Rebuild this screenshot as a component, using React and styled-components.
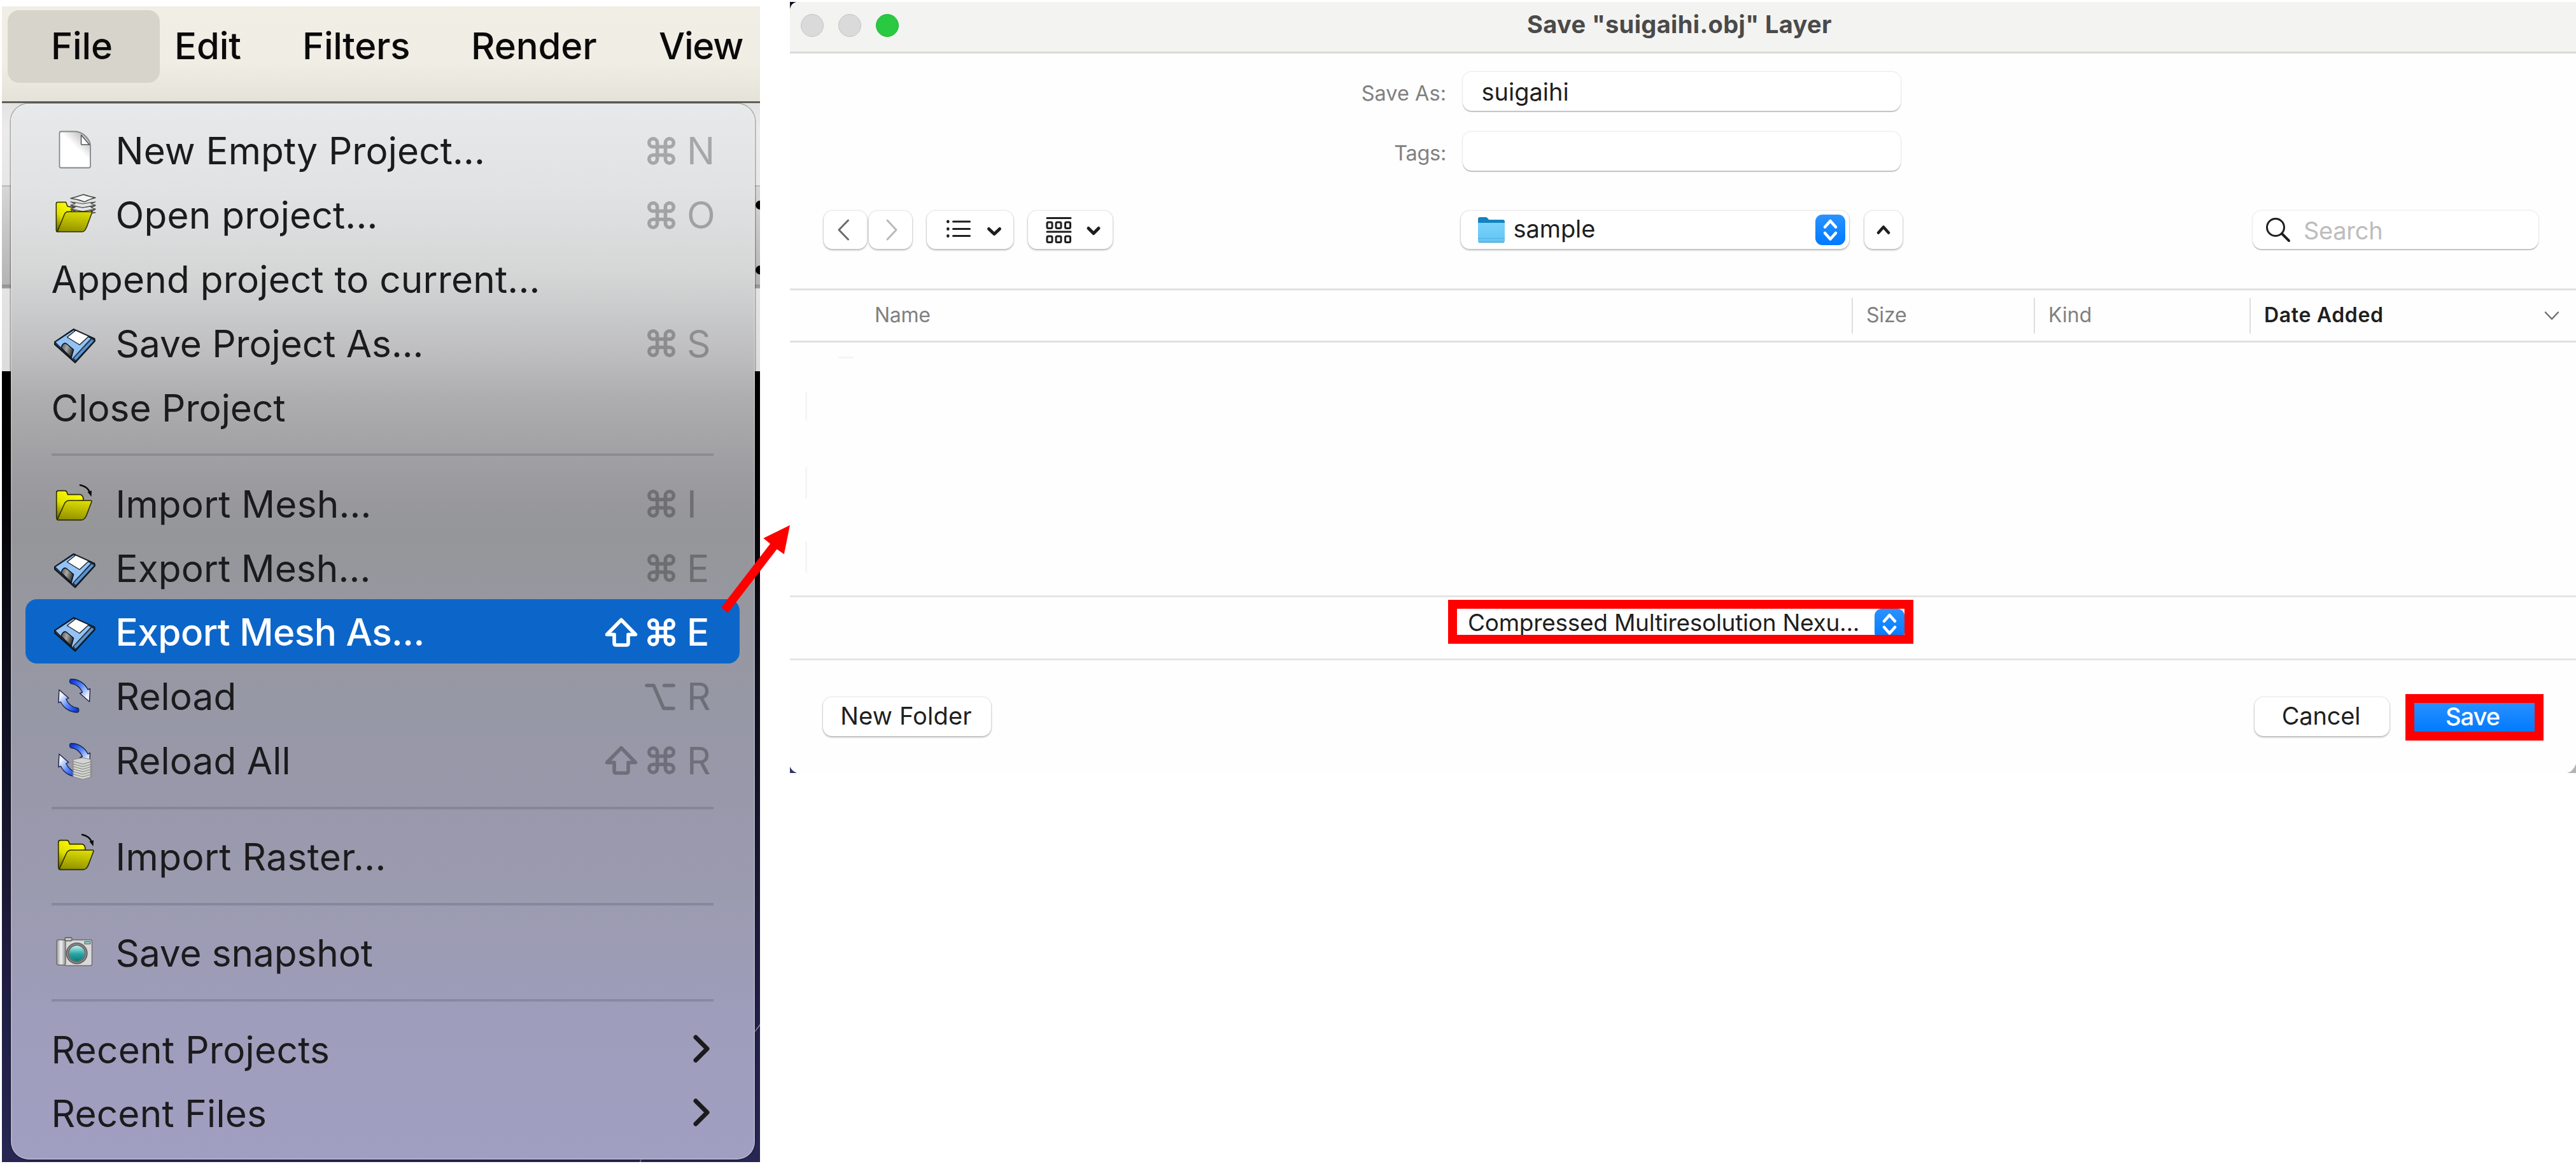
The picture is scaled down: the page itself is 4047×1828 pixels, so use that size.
import React from "react";
import styled, { createGlobalStyle, css } from "styled-components";

const GlobalStyle = createGlobalStyle`
  * { box-sizing: border-box; }
  body { margin: 0; background: #fff; }
`;

const Page = styled.main`
  position: relative;
  width: 4047px;
  height: 1828px;
  overflow: hidden;
  display: grid;
  grid-template-columns: 1191px 2806px;
  column-gap: 47px;
  padding-left: 3px;
  align-items: start;
  background: #fff;
  font-family: Inter, "Liberation Sans", sans-serif;
  font-optical-sizing: none;
`;

const Text = styled.span`
  display: block;
  white-space: nowrap;
  letter-spacing: ${(p) => p.$ls || 0}px;
`;

/* ---------- Application window with the open File menu ---------- */

const AppWindow = styled.section`
  margin-top: 10px;
  height: 1815px;
  display: flex;
  flex-direction: column;
  overflow: hidden;
`;

const MenuBar = styled.nav`
  height: 152px;
  display: flex;
  align-items: flex-start;
  padding: 6px 0 0 9px;
  border-bottom: 3px solid #5f605a;
  background: linear-gradient(#f1eee6 0, #efede4 60%, #e4e2d9 100%);
`;

const MenuTitle = styled.div`
  height: 114px;
  flex: none;
  display: flex;
  align-items: center;
  padding-left: ${(p) => p.$pad}px;
  padding-bottom: 2px;
  width: ${(p) => p.$w}px;
  border-radius: 18px;
  color: #0a0a0a;
  font-size: 58px;
  font-weight: 500;
  line-height: 72px;
  ${(p) => p.$open && css`background: #d7d4cc;`}
`;

const Backdrop = styled.div`
  position: relative;
  flex: 1;
  min-height: 0;
  padding: 1px 8px 4px 14px;
  background: linear-gradient(
    #e2e3e2 0, #ebebeb 40px, #e7e7e7 129px, #b9b9b9 129px, #b9b9b9 131px,
    #d6d6d6 131px, #b4b4b4 285px, #8f8f8f 285px, #a2a2a2 291px,
    #e4e4e4 291px, #dcdcdc 421px, #000 421px, #010101 560px, #0b0b16 800px,
    #15152b 1100px, #1e1d40 1350px, #282653 1663px
  );
`;

const BackdropDetail = styled.svg`
  position: absolute;
  inset: 0;
  width: 1191px;
  height: 1663px;
`;

const Menu = styled.div`
  position: relative;
  height: 100%;
  padding: 22px 24px 0 23px;
  border-radius: 28px;
  box-shadow: inset 0 0 0 2px rgba(255, 255, 255, 0.16), 0 0 0 1.5px rgba(0, 0, 0, 0.28);
  background: linear-gradient(
    #e7e9ea 0, #e0e2e3 140px, #d5d7d7 265px, #c8c9ca 335px, #bcbcbe 400px,
    #aeaeb0 460px, #a4a4a6 530px, #9b9a9f 600px, #959699 670px,
    #9797a0 790px, #9698a5 940px, #9998ab 1090px, #9b9bb0 1240px,
    #9e9dbb 1440px, #a09fc2 1660px
  );
`;

const MenuRow = styled.div`
  height: 100.8px;
  display: flex;
  align-items: center;
  padding: 0 41px 0 42px;
  border-radius: 18px;
  font-size: 58.5px;
  line-height: 72px;
  color: ${(p) => (p.$active ? "#fff" : "#1b1b1d")};
  font-weight: ${(p) => (p.$active ? 500 : 400)};
  background: ${(p) => (p.$active ? "#0c66c9" : "transparent")};
`;

const RowLabel = styled(Text)`
  padding-top: 4px;
  flex: 1;
  margin-left: ${(p) => (p.$plain ? -1.5 : 0)}px;
`;

const IconSlot = styled.svg`
  width: 72px;
  height: 72px;
  flex: none;
  margin-right: 27.5px;
  overflow: visible;
`;

const MenuRule = styled.div`
  height: 50.4px;
  margin: 0 41px 0 41px;
  display: flex;
  align-items: center;
  &::before {
    content: "";
    flex: 1;
    height: 4px;
    background: rgba(60, 58, 75, 0.2);
  }
`;

const Shortcut = styled.div`
  display: flex;
  align-items: center;
  gap: 13px;
  color: ${(p) => (p.$active ? "#fff" : "rgba(0, 0, 0, 0.27)")};
`;

const KeyGlyph = styled.svg`
  width: 50px;
  height: 50px;
  margin-top: 3px;
  overflow: visible;
  fill: none;
  stroke: currentColor;
  stroke-width: 5.6;
  stroke-linecap: round;
  stroke-linejoin: round;
`;

const KeyLetter = styled(Text)`
  width: 42px;
  margin-left: 2px;
  padding-top: 4px;
`;

const SubChevron = styled.svg`
  width: 32px;
  height: 50px;
  fill: none;
  stroke: #1b1b1d;
  stroke-width: 7;
  stroke-linecap: round;
  stroke-linejoin: round;
`;

const NewIcon = () => (
  <IconSlot viewBox="0 0 72 72">
    <defs>
      <linearGradient id="docShade" x1="0.9" y1="0" x2="0.45" y2="0.55">
        <stop offset="0.1" stopColor="#b5b5b5" />
        <stop offset="0.8" stopColor="#fff" />
      </linearGradient>
    </defs>
    <path d="M14 7.5H36C48 7.5 60 20 60 30V62a2.5 2.5 0 0 1-2.5 2.5H14a2.5 2.5 0 0 1-2.5-2.5V10A2.5 2.5 0 0 1 14 7.5Z" fill="url(#docShade)" stroke="#86878a" strokeWidth="1.8" />
    <path d="M45.5 13V26.5q0 2 2 1.800H58.5Z" fill="#fff" stroke="#55565a" strokeWidth="1.5" strokeLinejoin="round" />
  </IconSlot>
);

const FolderDefs = () => (
  <defs>
    <linearGradient id="folderBack" x1="0.6" y1="0" x2="0" y2="1">
      <stop offset="0" stopColor="#ffff00" />
      <stop offset="0.5" stopColor="#dede00" />
      <stop offset="1" stopColor="#555500" />
    </linearGradient>
    <linearGradient id="folderFront" x1="0.6" y1="0" x2="0.4" y2="1">
      <stop offset="0" stopColor="#dcdc00" />
      <stop offset="1" stopColor="#929200" />
    </linearGradient>
  </defs>
);

const OpenIcon = () => (
  <IconSlot viewBox="0 0 72 72">
    <FolderDefs />
    <path d="M8 64Q6.3 64 6.3 61V20q0-2.5 2.5-2.5H21.5l2.5 6.5 11 2.5-6 6H25L8 64Z" fill="url(#folderBack)" stroke="#2b2b00" strokeWidth="1.5" strokeLinejoin="round" />
    {[29, 23, 17].map((y) => (
      <path key={y} d={`M29 ${y}l7 3-7 2 19 4 20-4-7-2 7-3-20 3z`} fill="#e4e4e4" stroke="#4a4a4a" strokeWidth="1.2" strokeLinejoin="round" />
    ))}
    <path d="M29 11.5Q39 9 49 5.5Q60 9 68 10.5Q57 13.5 51 17Q41 13 29 11.5Z" fill="#f5f5f5" stroke="#4a4a4a" strokeWidth="1.4" strokeLinejoin="round" />
    <path d="M23 32.5H63L54 57Q51 64 47 64H8Q15 47 19 37Q21 32.5 25 32.5Z" fill="url(#folderFront)" stroke="#2b2b00" strokeWidth="1.5" strokeLinejoin="round" />
  </IconSlot>
);

const ImportIcon = ({ box }) => (
  <IconSlot viewBox={box || "0 0 72 72"}>
    <FolderDefs />
    <path d="M11 57.5Q9.7 56 9.7 53V15q0-3.400 3-3.400H23q2.7 0 3.5 3.5l.7 2.5H47q5 1 5 9L26 30Z" fill="url(#folderBack)" stroke="#2b2b00" strokeWidth="1.6" strokeLinejoin="round" />
    <path d="M30 27H63.5q2 0 1.200 2.5L57 50Q54 57.6 49 57.6H12.5q-1.5 0-.8-2L22 32.5Q24.5 27 30 27Z" fill="url(#folderFront)" stroke="#2b2b00" strokeWidth="1.6" strokeLinejoin="round" />
    <path d="M47 2.8Q58 5 62 14" fill="none" stroke="#0c0c0c" strokeWidth="2.6" strokeLinecap="round" />
    <path d="M58.5 13.5L65 11.5L64.5 21Z" fill="#0c0c0c" />
  </IconSlot>
);

const SaveIcon = () => (
  <IconSlot viewBox="0 0 72 72">
    <defs>
      <linearGradient id="shutter" x1="0" y1="0.3" x2="1" y2="0.7">
        <stop offset="0" stopColor="#5c5c5c" />
        <stop offset="0.4" stopColor="#a8a8a8" />
        <stop offset="1" stopColor="#1c1c1c" />
      </linearGradient>
    </defs>
    <path d="M4 35L33.5 15L66.5 30L67 33.5L36 67.5L4 39Z" fill="#23364d" stroke="#10161f" strokeWidth="2" strokeLinejoin="round" />
    <path d="M5 35.3L33.5 16.5L61 29.5L31.5 61.5Z" fill="#93c3f5" stroke="#1d2a3a" strokeWidth="1" strokeLinejoin="round" />
    <path d="M62 31L65.5 33L37 63.5L34 60.5Z" fill="#5b93cf" />
    <path d="M37 16.8L57.5 26L43 39.5L23.5 27.5Z" fill="#fff" stroke="#1c232b" strokeWidth="1.4" strokeLinejoin="round" />
    <path d="M14 44Q17 35.5 22 37.5L33.5 47L30 60Z" fill="url(#shutter)" stroke="#111" strokeWidth="1.5" strokeLinejoin="round" />
  </IconSlot>
);

const ReloadArrow = ({ flip }) => (
  <path
    transform={flip ? "rotate(180 34.7 36.6)" : undefined}
    d="M30 10.5C41 10.5 51 16.5 56 27L59.5 25.5L58.5 46L43.5 33L47.5 31C44 23.5 38 18.5 30 17.5C26.5 16.5 27 10.5 30 10.5Z"
    fill="url(#reloadBlue)"
    stroke="#1d2445"
    strokeWidth="1.4"
    strokeLinejoin="round"
  />
);

const ReloadIcon = ({ stack }) => (
  <IconSlot viewBox="0 0 72 72">
    <defs>
      <linearGradient id="reloadBlue" x1="0" y1="0" x2="1" y2="1">
        <stop offset="0.1" stopColor="#0a3be0" />
        <stop offset="0.45" stopColor="#5c8bff" />
        <stop offset="0.8" stopColor="#eef2ff" />
      </linearGradient>
    </defs>
    <ReloadArrow />
    <ReloadArrow flip />
    {stack &&
      [62, 58, 54, 50, 46, 42, 38].map((y) => (
        <path key={y} d={`M32 ${y - 2}l16-3 14 3-2 2 2 1-14 4-14-4-1-1z`} fill="#d4d4d2" stroke="#85857f" strokeWidth="1.1" strokeLinejoin="round" />
      ))}
  </IconSlot>
);

const CameraIcon = () => (
  <IconSlot viewBox="0 0 72 72">
    <defs>
      <linearGradient id="lens" x1="0" y1="0" x2="0" y2="1">
        <stop offset="0" stopColor="#b9f0ee" />
        <stop offset="0.55" stopColor="#27a3a3" />
        <stop offset="1" stopColor="#0c7c7e" />
      </linearGradient>
      <linearGradient id="grip" x1="0" y1="0" x2="1" y2="0">
        <stop offset="0" stopColor="#9a9a9a" />
        <stop offset="0.5" stopColor="#f1f1f1" />
        <stop offset="1" stopColor="#8d8d8d" />
      </linearGradient>
    </defs>
    <rect x="19" y="17" width="43.5" height="40.5" rx="2.5" fill="#d9d9d9" stroke="#6c6c6c" strokeWidth="1.4" />
    <rect x="7" y="17" width="14" height="39.5" rx="3" fill="url(#grip)" stroke="#6c6c6c" strokeWidth="1.4" />
    <rect x="20" y="13.5" width="11" height="5" rx="2" fill="#c9c9c9" stroke="#555" strokeWidth="1.3" />
    <rect x="51" y="19.5" width="9" height="4" fill="#7fc9c7" stroke="#5b6a6a" strokeWidth="1" />
    <circle cx="38.7" cy="38.3" r="14.5" fill="none" stroke="#616161" strokeWidth="5" />
    <circle cx="38.7" cy="38.3" r="14.5" fill="none" stroke="#8f8f8f" strokeWidth="1.6" />
    <circle cx="38.7" cy="38.3" r="12" fill="url(#lens)" />
  </IconSlot>
);

const Command = () => (
  <KeyGlyph viewBox="-25 -25 50 50">
    <path transform="scale(2.14) translate(-12 -12)" strokeWidth="2.6" d="M15 6v12a3 3 0 1 0 3-3H6a3 3 0 1 0 3 3V6a3 3 0 1 0-3 3h12a3 3 0 1 0-3-3" />
  </KeyGlyph>
);
const Shift = () => (
  <KeyGlyph viewBox="-25 -25 50 50">
    <path d="M0-19.5L22.5 3.5H11V17q0 3-3 3H-8q-3 0-3-3V3.5H-22.5Z" />
  </KeyGlyph>
);
const Option = () => (
  <KeyGlyph viewBox="-25 -25 50 50">
    <path d="M-23-17.5H-12L3.500 18.500H19M4.5-17.5H19" />
  </KeyGlyph>
);
const KEYS = { cmd: Command, shift: Shift, opt: Option };

const MENU = [
  { label: "New Empty Project...", ls: 0.11, icon: <NewIcon />, keys: ["cmd"], k: "N" },
  { label: "Open project...", ls: 0.2, icon: <OpenIcon />, keys: ["cmd"], k: "O" },
  { label: "Append project to current...", ls: 0.19 },
  { label: "Save Project As...", ls: -0.03, icon: <SaveIcon />, keys: ["cmd"], k: "S" },
  { label: "Close Project", ls: 0.03 },
  null,
  { label: "Import Mesh...", ls: 0.2, icon: <ImportIcon box="3 -5 72 72" />, keys: ["cmd"], k: "I" },
  { label: "Export Mesh...", ls: 0.1, icon: <SaveIcon />, keys: ["cmd"], k: "E" },
  { label: "Export Mesh As...", ls: -0.55, icon: <SaveIcon />, keys: ["shift", "cmd"], k: "E", active: true },
  { label: "Reload", ls: 0.09, icon: <ReloadIcon />, keys: ["opt"], k: "R" },
  { label: "Reload All", ls: 0.07, icon: <ReloadIcon stack />, keys: ["shift", "cmd"], k: "R" },
  null,
  { label: "Import Raster...", ls: 0.39, icon: <ImportIcon /> },
  null,
  { label: "Save snapshot", ls: -0.1, icon: <CameraIcon /> },
  null,
  { label: "Recent Projects", ls: 0.3, sub: true },
  { label: "Recent Files", ls: 0.18, sub: true },
];

const TITLES = [
  { t: "File", w: 239, pad: 68, ls: -0.1, open: true },
  { t: "Edit", w: 201, pad: 23, ls: -0.1 },
  { t: "Filters", w: 265, pad: 23, ls: -0.3 },
  { t: "Render", w: 295, pad: 23, ls: -0.1 },
  { t: "View", w: 160, pad: 23, ls: -1.2 },
];

function FileMenu() {
  return (
    <AppWindow>
      <MenuBar>
        {TITLES.map((m) => (
          <MenuTitle key={m.t} $w={m.w} $pad={m.pad} $open={m.open}>
            <Text $ls={m.ls}>{m.t}</Text>
          </MenuTitle>
        ))}
      </MenuBar>
      <Backdrop>
        <BackdropDetail viewBox="0 0 1191 1663">
          <circle cx="1191" cy="160" r="7" fill="#000" />
          <circle cx="1191" cy="262" r="7" fill="#000" />
          <path d="M1180 1462L1192 1446M1002 1664L1005 1658" stroke="#8d8b98" strokeWidth="1.5" />
        </BackdropDetail>
        <Menu>
          {MENU.map((m, i) =>
            m === null ? (
              <MenuRule key={i} />
            ) : (
              <MenuRow key={i} $active={m.active}>
                {m.icon}
                <RowLabel $ls={m.ls} $plain={!m.icon}>{m.label}</RowLabel>
                {m.keys && (
                  <Shortcut $active={m.active}>
                    {m.keys.map((k) => {
                      const Key = KEYS[k];
                      return <Key key={k} />;
                    })}
                    <KeyLetter>{m.k}</KeyLetter>
                  </Shortcut>
                )}
                {m.sub && (
                  <SubChevron viewBox="0 0 32 50">
                    <path d="M4 7L22 25L4 43" />
                  </SubChevron>
                )}
              </MenuRow>
            )
          )}
        </Menu>
      </Backdrop>
    </AppWindow>
  );
}

/* ---------- Save dialog ---------- */

const Dialog = styled.section`
  position: relative;
  margin-top: 3px;
  height: 1211px;
  display: flex;
  flex-direction: column;
  background: #fefefe;
`;

const TitleBar = styled.header`
  height: 81px;
  display: grid;
  grid-template-columns: 1fr auto 1fr;
  align-items: center;
  padding: 0 17px 4px;
  border-bottom: 3px solid #dadad9;
  background: #f3f3f1;
`;

const Lights = styled.div`
  display: flex;
  gap: 23px;
`;

const Light = styled.span`
  width: 36px;
  height: 36px;
  border-radius: 50%;
  border: 1.5px solid ${(p) => (p.$on ? "#22b83a" : "#c4c4c3")};
  background: ${(p) => (p.$on ? "#29c941" : "#dadada")};
`;

const WindowTitle = styled(Text)`
  padding: 0 11px 4px 0;
  color: #4a4a4a;
  font-size: 38px;
  font-weight: 700;
  line-height: 46px;
`;

const raised = css`
  background: #fff;
  border-radius: 14px;
  box-shadow: 0 0 2px 1px rgba(0, 0, 0, 0.1), 0 2px 3px rgba(0, 0, 0, 0.24);
`;

const Form = styled.div`
  display: grid;
  grid-template-columns: 1031px 688px;
  column-gap: 26px;
  row-gap: 33px;
  padding-top: 29px;
`;

const FieldLabel = styled(Text)`
  justify-self: end;
  align-self: center;
  padding-top: 7px;
  color: #808080;
  font-size: 32.5px;
  line-height: 40px;
`;

const Field = styled.div`
  height: 61px;
  display: flex;
  align-items: center;
  padding-left: 29.5px;
  border-radius: 14px;
  background: #fff;
  box-shadow: 0 0 0 1.5px rgba(0, 0, 0, 0.06), 0 2px 1px rgba(0, 0, 0, 0.2);
  color: #1f1f1f;
  font-size: 38px;
  line-height: 46px;
`;

const Toolbar = styled.div`
  display: flex;
  align-items: center;
  height: 60px;
  margin-top: 63px;
  padding-left: 53px;
`;

const ToolButton = styled.div`
  ${raised}
  width: ${(p) => p.$w}px;
  height: 60px;
  margin-left: ${(p) => p.$gap || 0}px;
  flex: none;
  display: flex;
  align-items: center;
  justify-content: center;
`;

const Stroke = styled.svg`
  display: block;
  flex: none;
  width: ${(p) => p.$w}px;
  height: ${(p) => p.$h}px;
  fill: none;
  stroke: ${(p) => p.$c || "#1e1e1e"};
  stroke-width: ${(p) => p.$s || 3};
  stroke-linecap: round;
  stroke-linejoin: round;
`;

const FolderPopup = styled.div`
  ${raised}
  width: 610px;
  height: 60px;
  margin-left: 547px;
  display: flex;
  align-items: center;
  padding: 0 6px 0 27px;
  color: #1f1f1f;
  font-size: 38px;
  line-height: 46px;
`;

const PopupName = styled(Text)`
  flex: 1;
  padding: 0 0 5px 13.5px;
`;

const Stepper = styled.div`
  width: 47px;
  height: 48px;
  flex: none;
  display: flex;
  align-items: center;
  justify-content: center;
  border-radius: 11px;
  background: linear-gradient(#2a92ff, #007aff);
`;

const SearchField = styled(Field)`
  width: 449px;
  height: 60px;
  margin-left: 550px;
  padding-left: 20px;
  gap: 20px;
  color: #bdbdbd;
`;

const SearchHint = styled(Text)`
  padding-top: 2px;
`;

const Columns = styled.div`
  height: 85px;
  margin-top: 62px;
  display: grid;
  grid-template-columns: 1668px 286px 339px 1fr;
  align-items: center;
  border-top: 3px solid #e1e1e1;
  border-bottom: 3px solid #e1e1e1;
`;

const Column = styled.div`
  height: 56px;
  display: flex;
  align-items: center;
  justify-content: space-between;
  padding: 0 26px 0 ${(p) => p.$pad || 21}px;
  border-left: ${(p) => (p.$first ? "none" : "2px solid #dedede")};
  color: ${(p) => (p.$sorted ? "#1f1f1f" : "#808080")};
  font-size: 32px;
  font-weight: ${(p) => (p.$sorted ? 600 : 400)};
  line-height: 40px;
`;

const ColumnName = styled(Text)`
  padding-bottom: 2px;
`;

const FileList = styled.div`
  position: relative;
  height: 397px;
`;

const RowTrace = styled.i`
  position: absolute;
  left: ${(p) => p.$x}px;
  top: ${(p) => p.$y}px;
  width: ${(p) => p.$w}px;
  height: ${(p) => p.$h}px;
  border-radius: 4px 0 0 4px;
  background: #f5f5f5;
`;

const FormatBar = styled.div`
  height: 102px;
  padding: 4px 0 0 1034px;
  border-top: 3px solid #e5e5e5;
  border-bottom: 3px solid #e5e5e5;
`;

const FormatPopup = styled.div`
  width: 731px;
  height: 69px;
  display: flex;
  align-items: flex-start;
  justify-content: space-between;
  padding-left: 17px;
  overflow: hidden;
  border: 14px solid #f00;
  background: #fff;
  color: #1f1f1f;
  font-size: 37px;
  line-height: 43px;
`;

const Footer = styled.footer`
  display: flex;
  justify-content: space-between;
  padding: 53px 51px 0 52px;
`;

const FooterActions = styled.div`
  display: flex;
  gap: 25px;
`;

const Button = styled.div`
  ${raised}
  width: ${(p) => p.$w}px;
  height: 61px;
  margin-top: 5px;
  display: flex;
  align-items: center;
  justify-content: center;
  padding: 0 3px 3px 0;
  color: #1f1f1f;
  font-size: 38px;
  line-height: 46px;
`;

const SaveButton = styled.div`
  width: 217px;
  height: 73px;
  display: flex;
  align-items: center;
  justify-content: center;
  padding: 0 6px 4px 0;
  border: 14px solid #f00;
  background: linear-gradient(#2990ff, #007aff) padding-box;
  color: #fff;
  font-size: 38px;
  font-weight: 500;
  line-height: 40px;
`;

const Corner = styled.svg`
  position: absolute;
  ${(p) => (p.$right ? "right: 0;" : "left: 0;")}
  ${(p) => (p.$bottom ? "bottom: 0;" : "top: 0;")}
  width: 14px;
  height: 14px;
`;

const CalloutArrow = styled.svg`
  position: absolute;
  left: 1130px;
  top: 820px;
  width: 116px;
  height: 148px;
`;

const UpDown = () => (
  <Stroke $w={47} $h={48} $c="#fff" $s={4.5} viewBox="0 0 47 48">
    <path d="M15 19.5L23.5 10L32 19.5M15 29L23.5 38.5L32 29" />
  </Stroke>
);

const FolderGlyph = () => (
  <svg width="42" height="42" viewBox="0 0 42 42">
    <defs>
      <linearGradient id="folderFace" x1="0" y1="0" x2="0" y2="1">
        <stop offset="0" stopColor="#7ad4fb" />
        <stop offset="1" stopColor="#63c3f3" />
      </linearGradient>
    </defs>
    <path d="M0 4Q0 1 3 1H12Q14 1 15.5 3L17 5H39Q42 5 42 8V14H0Z" fill="#1583bd" />
    <path d="M0 10H42V38Q42 41 39 41H3Q0 41 0 38Z" fill="url(#folderFace)" />
    <path d="M0 34.5H42" stroke="#4fb0e0" strokeWidth="1.2" />
    <path d="M1 40.5H41" stroke="#4aa6d6" strokeWidth="1.5" />
  </svg>
);

function SaveDialog() {
  return (
    <Dialog>
      <TitleBar>
        <Lights>
          <Light />
          <Light />
          <Light $on />
        </Lights>
        <WindowTitle $ls={0.37}>Save "suigaihi.obj" Layer</WindowTitle>
      </TitleBar>
      <Form>
        <FieldLabel>Save As:</FieldLabel>
        <Field><Text>suigaihi</Text></Field>
        <FieldLabel $ls={-0.3}>Tags:</FieldLabel>
        <Field />
      </Form>
      <Toolbar>
        <ToolButton $w={68}>
          <Stroke $w={24} $h={36} $c="#6b6b6b" viewBox="2 0 24 36"><path d="M18.5 3L4 18L18.5 33" /></Stroke>
        </ToolButton>
        <ToolButton $w={68} $gap={3}>
          <Stroke $w={24} $h={36} $c="#b9b9b9" viewBox="-4 0 24 36"><path d="M3 3L17 18L3 33" /></Stroke>
        </ToolButton>
        <ToolButton $w={136} $gap={23}>
          <Stroke $w={104} $h={40} viewBox="0 0 104 40">
            <path d="M25.5 7H51.5M25.5 18.4H51.5M25.5 29.5H51.5" />
            <path d="M17.3 6.8v.5M17.3 18.2v.5M17.3 29.3v.5" strokeWidth="4.5" />
            <path d="M81.5 18.5L90 26.5L98.5 18.5" strokeWidth="5" />
          </Stroke>
        </ToolButton>
        <ToolButton $w={133} $gap={23}>
          <Stroke $w={98} $h={44} viewBox="0 0 98 44">
            <path d="M12 3.5H49M12 25H49" />
            {[10, 32].map((y) =>
              [12, 26, 40.5].map((x) => <rect key={`${x}-${y}`} x={x} y={y} width="8" height="9.5" rx="2" />)
            )}
            <path d="M77 19.5L85 27.5L93 19.5" strokeWidth="5" />
          </Stroke>
        </ToolButton>
        <FolderPopup>
          <FolderGlyph />
          <PopupName $ls={-0.1}>sample</PopupName>
          <Stepper><UpDown /></Stepper>
        </FolderPopup>
        <ToolButton $w={60} $gap={24}>
          <Stroke $w={22} $h={20} $s={4.5} viewBox="0 0 22 20"><path d="M3 14.5L11 5.5L19 14.5" /></Stroke>
        </ToolButton>
        <SearchField>
          <Stroke $w={40} $h={40} viewBox="0 0 40 40">
            <circle cx="16" cy="16" r="13.5" />
            <path d="M26 26L37 37" strokeWidth="4" />
          </Stroke>
          <SearchHint $ls={-0.3}>Search</SearchHint>
        </SearchField>
      </Toolbar>
      <Columns>
        <Column $first $pad={133}><ColumnName $ls={-0.3}>Name</ColumnName></Column>
        <Column><ColumnName $ls={-0.2}>Size</ColumnName></Column>
        <Column><ColumnName>Kind</ColumnName></Column>
        <Column $sorted>
          <ColumnName $ls={0.65}>Date Added</ColumnName>
          <Stroke $w={24} $h={16} $c="#6f6f6f" $s={2.5} viewBox="0 0 24 16"><path d="M2 2.5L12 13L22 2.5" /></Stroke>
        </Column>
      </Columns>
      <FileList>
        <RowTrace $x={76} $y={22} $w={24} $h={3} />
        <RowTrace $x={24} $y={78} $w={3} $h={45} />
        <RowTrace $x={24} $y={195} $w={3} $h={50} />
        <RowTrace $x={24} $y={312} $w={3} $h={50} />
      </FileList>
      <FormatBar>
        <FormatPopup>
          <Text $ls={-0.27}>Compressed Multiresolution Nexu...</Text>
          <Stepper><UpDown /></Stepper>
        </FormatPopup>
      </FormatBar>
      <Footer>
        <Button $w={264}><Text $ls={0.2}>New Folder</Text></Button>
        <FooterActions>
          <Button $w={212}><Text $ls={-0.2}>Cancel</Text></Button>
          <SaveButton><Text $ls={-1}>Save</Text></SaveButton>
        </FooterActions>
      </Footer>
      <Corner viewBox="0 0 14 14"><path d="M0 0H10Q2 2 0 11Z" fill="#0d0d1a" /></Corner>
      <Corner $bottom viewBox="0 0 14 14"><path d="M0 4Q3 11 11 14H0Z" fill="#34336b" /></Corner>
      <Corner $right $bottom viewBox="0 0 14 14"><path d="M14 0V14H0Q9 12 14 0Z" fill="#b3b3b3" /></Corner>
    </Dialog>
  );
}

export default function App() {
  return (
    <Page>
      <GlobalStyle />
      <FileMenu />
      <SaveDialog />
      <CalloutArrow viewBox="1130 820 116 148">
        <path d="M1241 824.7L1231.8 870.2L1220.5 862.5L1143.4 962.8L1133 954L1210 854L1199.3 845.3Z" fill="#f00" />
      </CalloutArrow>
    </Page>
  );
}
